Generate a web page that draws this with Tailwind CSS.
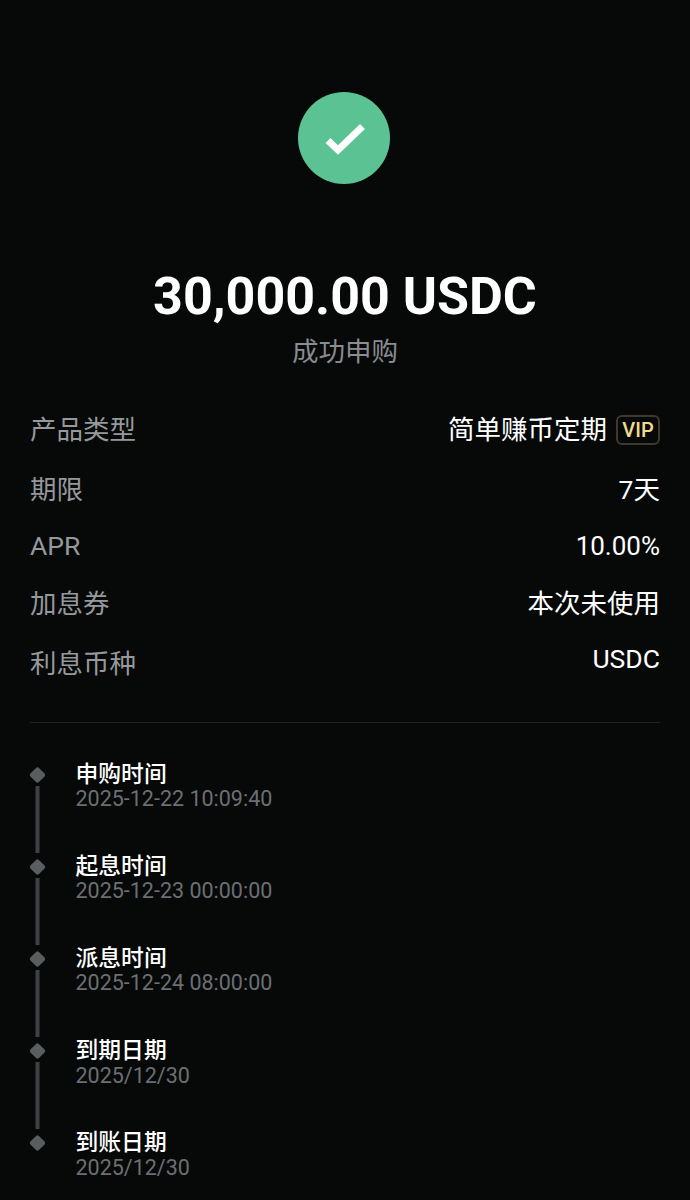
<!doctype html>
<html lang="zh"><head><meta charset="utf-8"><script src="https://cdn.jsdelivr.net/npm/@tailwindcss/browser@4"></script></head>
<body class="bg-[#070909] font-['Roboto','Noto_Sans_CJK_SC',sans-serif]">
<main class="w-[690px] h-[1200px] overflow-hidden px-[30px] pt-[92px] bg-[#070909]">
  <div class="flex justify-center pr-[2px]">
    <div class="w-[92px] h-[92px] rounded-full bg-[#5bc293] flex items-center justify-center">
      <svg width="42" height="34" viewBox="0 0 42 34" fill="none"><path d="M5 19.5 L15 29 L39.5 5.5" stroke="#fff" stroke-width="7"/></svg>
    </div>
  </div>
  <h1 class="mt-[83px] text-center text-[52px] leading-[60px] font-bold text-white">30,000.00 USDC</h1>
  <p class="mt-[7px] text-center text-[26.5px] leading-[36px] text-[#8a8d90]">成功申购</p>
  <dl class="mt-[30px] text-[26.5px] leading-[36px]">
    <div class="flex justify-between items-center h-[60px]"><dt class="text-[#96999b]">产品类型</dt><dd class="flex items-center gap-[9px] text-white">简单赚币定期<span class="h-[30px] w-[44px] rounded-[6px] border-2 border-[#3f392b] text-[#f5d98f] text-[20px] font-medium leading-none flex items-center justify-center">VIP</span></dd></div>
    <div class="flex justify-between items-center h-[60px]"><dt class="text-[#96999b]">期限</dt><dd class="text-white">7天</dd></div>
    <div class="flex justify-between items-center h-[52px]"><dt class="text-[#96999b]">APR</dt><dd class="text-white text-[26px]">10.00%</dd></div>
    <div class="flex justify-between items-center h-[64px]"><dt class="text-[#96999b]">加息券</dt><dd class="text-white">本次未使用</dd></div>
    <div class="flex justify-between items-center h-[56px]"><dt class="text-[#96999b]">利息币种</dt><dd class="text-white mb-[10px]">USDC</dd></div>
  </dl>
  <div class="mt-[30px] h-px bg-[#1f2122]"></div>
  <ol class="mt-[38px]">
    <li class="flex gap-[29.5px] h-[92px]"><div class="flex flex-col items-center w-[16px] pt-[8px]"><span class="w-[12px] h-[12px] -translate-x-[0.5px] rotate-45 rounded-[2px] bg-[#5a5d60] shrink-0"></span><span class="w-[3.5px] h-[67px] mt-[5px] bg-[#3e4145] -translate-x-[0.5px]"></span></div><div class="pt-[1px]"><p class="text-[22.8px] leading-[25px] text-white font-medium">申购时间</p><p class="text-[21.5px] leading-[24px] text-[#6c6f72]">2025-12-22 10:09:40</p></div></li>
    <li class="flex gap-[29.5px] h-[92px]"><div class="flex flex-col items-center w-[16px] pt-[8px]"><span class="w-[12px] h-[12px] -translate-x-[0.5px] rotate-45 rounded-[2px] bg-[#5a5d60] shrink-0"></span><span class="w-[3.5px] h-[67px] mt-[5px] bg-[#3e4145] -translate-x-[0.5px]"></span></div><div class="pt-[1px]"><p class="text-[22.8px] leading-[25px] text-white font-medium">起息时间</p><p class="text-[21.5px] leading-[24px] text-[#6c6f72]">2025-12-23 00:00:00</p></div></li>
    <li class="flex gap-[29.5px] h-[92px]"><div class="flex flex-col items-center w-[16px] pt-[8px]"><span class="w-[12px] h-[12px] -translate-x-[0.5px] rotate-45 rounded-[2px] bg-[#5a5d60] shrink-0"></span><span class="w-[3.5px] h-[67px] mt-[5px] bg-[#3e4145] -translate-x-[0.5px]"></span></div><div class="pt-[1px]"><p class="text-[22.8px] leading-[25px] text-white font-medium">派息时间</p><p class="text-[21.5px] leading-[24px] text-[#6c6f72]">2025-12-24 08:00:00</p></div></li>
    <li class="flex gap-[29.5px] h-[92px]"><div class="flex flex-col items-center w-[16px] pt-[8px]"><span class="w-[12px] h-[12px] -translate-x-[0.5px] rotate-45 rounded-[2px] bg-[#5a5d60] shrink-0"></span><span class="w-[3.5px] h-[67px] mt-[5px] bg-[#3e4145] -translate-x-[0.5px]"></span></div><div class="pt-[1px]"><p class="text-[22.8px] leading-[25px] text-white font-medium">到期日期</p><p class="text-[21.5px] leading-[24px] mt-[1px] text-[#6c6f72]">2025/12/30</p></div></li>
    <li class="flex gap-[29.5px] h-[92px]"><div class="flex flex-col items-center w-[16px] pt-[8px]"><span class="w-[12px] h-[12px] -translate-x-[0.5px] rotate-45 rounded-[2px] bg-[#5a5d60] shrink-0"></span></div><div class="pt-[1px]"><p class="text-[22.8px] leading-[25px] text-white font-medium">到账日期</p><p class="text-[21.5px] leading-[24px] mt-[1px] text-[#6c6f72]">2025/12/30</p></div></li>
  </ol>
</main>
</body></html>
